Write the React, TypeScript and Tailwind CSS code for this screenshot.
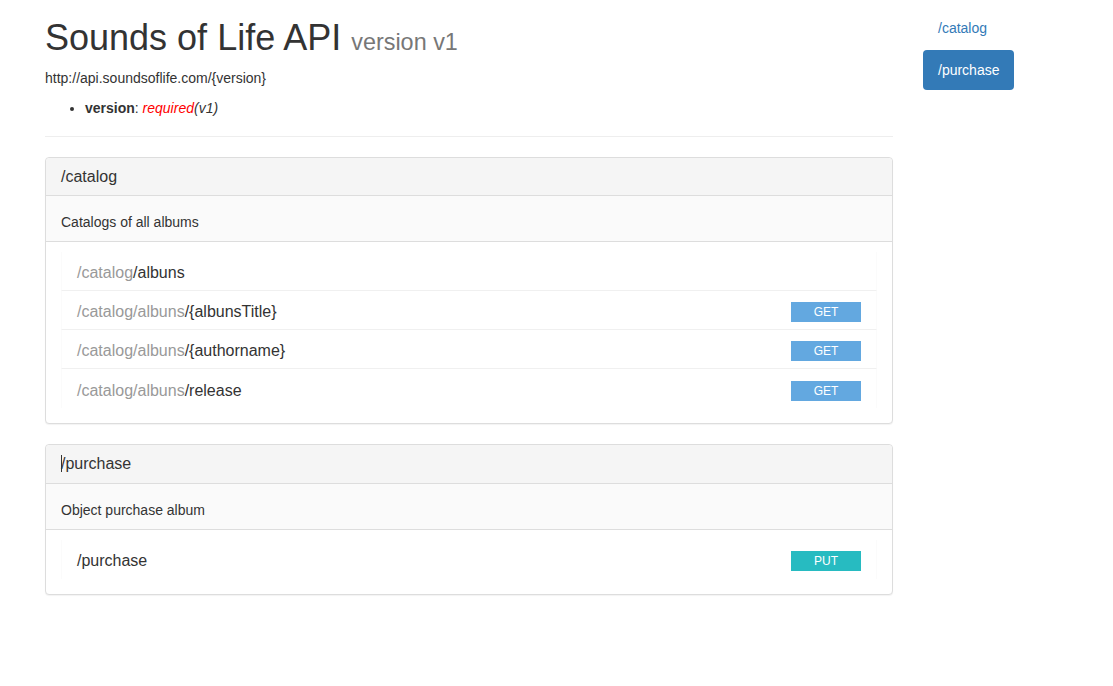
import React from "react";

type Item = { prefix: string; name: string; method?: "GET" | "PUT" };

function Badge({ method }: { method: "GET" | "PUT" }) {
  return (
    <span
      className={
        "flex h-[20px] w-[70px] items-center justify-center text-[12px] leading-none text-white " +
        (method === "GET" ? "bg-[#63a8e0]" : "bg-[#27bbc1]")
      }
    >
      {method}
    </span>
  );
}

function Panel({
  title,
  desc,
  items,
  caret,
}: {
  title: string;
  desc: string;
  items: Item[];
  caret?: boolean;
}) {
  return (
    <div className="mb-[20px] rounded-[4px] border border-[#dddddd] bg-white shadow-[0_1px_1px_rgba(0,0,0,0.05)]">
      <div className="flex items-center rounded-t-[4px] border-b border-[#dddddd] bg-[#f5f5f5] px-[15px] py-[10px] text-[16px] leading-[17.6px] text-[#333333]">
        {caret && <span className="mr-[-1px] inline-block h-[17px] w-[1px] bg-[#333333]" />}
        {title}
      </div>
      <div className="border-b border-[#dddddd] bg-[#fafafa] px-[15px] pb-[9px] pt-[16px] text-[14px] leading-[20px] text-[#333333]">
        {desc}
      </div>
      <div className="px-[15px] pb-[15px] pt-[10px]">
        {items.map((it, i) => (
          <div
            key={i}
            className={
              "flex h-[39px] items-center justify-between border-x border-[#fbfbfb] px-[15px] pt-[4px] text-[16px] " +
              (i < items.length - 1 ? "border-b border-b-[#f0f0f0]" : "")
            }
          >
            <span>
              <span className="text-[#999999]">{it.prefix}</span>
              <span className="text-[#333333]">{it.name}</span>
            </span>
            {it.method && <Badge method={it.method} />}
          </div>
        ))}
      </div>
    </div>
  );
}

export default function App() {
  return (
    <div
      className="flex min-h-[686px] bg-white pl-[45px] text-[#333333]"
      style={{ fontFamily: '"Liberation Sans", Arial, sans-serif' }}
    >
      <div className="w-[848px]">
        <h1 className="mb-[10px] mt-[18px] text-[36px] font-normal leading-[39.6px] text-[#333333]">
          Sounds of Life API{" "}
          <span className="text-[23.4px] leading-none text-[#777777]">version v1</span>
        </h1>
        <p className="mb-[10px] text-[14px] leading-[20px]">
          http://api.soundsoflife.com/{"{version}"}
        </p>
        <ul className="mb-[18px] list-disc pl-[40px] text-[14px] leading-[20px]">
          <li>
            <strong className="font-bold">version</strong>:{" "}
            <em className="italic text-[#ff0000]">required</em>
            <em className="italic">(v1)</em>
          </li>
        </ul>
        <hr className="mb-[20px] border-0 border-t border-[#eeeeee]" />
        <Panel
          title="/catalog"
          desc="Catalogs of all albums"
          items={[
            { prefix: "/catalog", name: "/albuns" },
            { prefix: "/catalog/albuns", name: "/{albunsTitle}", method: "GET" },
            { prefix: "/catalog/albuns", name: "/{authorname}", method: "GET" },
            { prefix: "/catalog/albuns", name: "/release", method: "GET" },
          ]}
        />
        <Panel
          title="/purchase"
          desc="Object purchase album"
          caret
          items={[{ prefix: "", name: "/purchase", method: "PUT" }]}
        />
      </div>
      <div className="ml-[30px] mt-[8px] w-[160px] text-[14px] leading-[20px]">
        <div className="flex flex-col items-start gap-[2px]">
          <a className="rounded-[4px] px-[15px] py-[10px] text-[#337ab7]">/catalog</a>
          <a className="rounded-[4px] bg-[#337ab7] px-[15px] py-[10px] text-white">/purchase</a>
        </div>
      </div>
    </div>
  );
}
